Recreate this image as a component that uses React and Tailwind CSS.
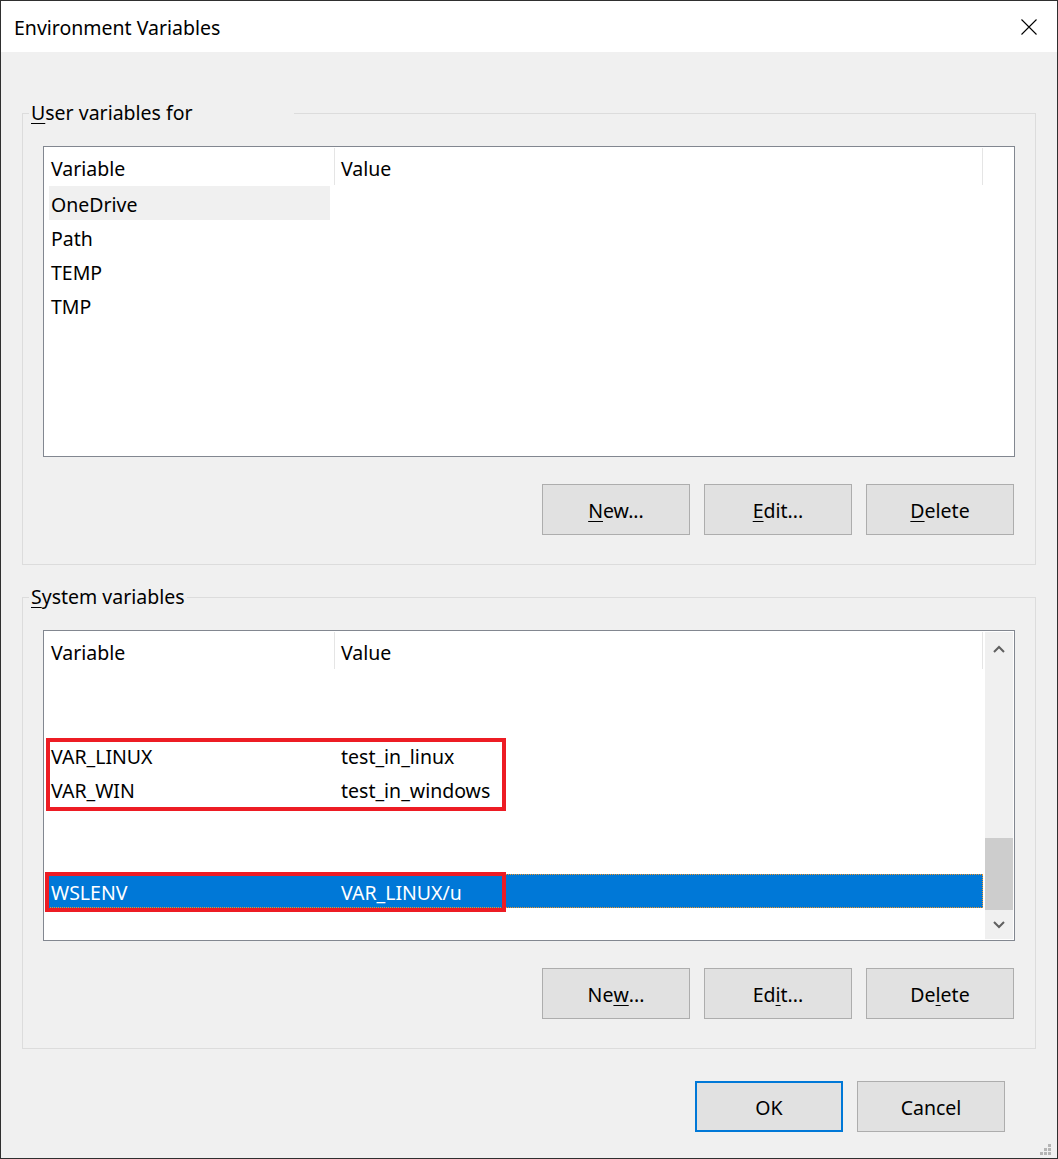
import React from 'react';

const Mn = ({ children }) => (
    <span className="underline decoration-1 underline-offset-[3px]">{children}</span>
);

const Btn = ({ children, primary }) => (
    <button
        className={
            primary
                ? 'w-[148px] h-[51px] pt-[2px] bg-[#e1e1e1] border-2 border-[#0078d7] flex items-center justify-center'
                : 'w-[148px] h-[51px] pt-[2px] bg-[#e1e1e1] border border-[#adadad] flex items-center justify-center'
        }
    >
        {children}
    </button>
);

const Header = () => (
    <div className="flex h-[39px] shrink-0 items-center">
        <div className="w-[290px] pl-[7px] pt-[5px]">Variable</div>
        <div className="w-px h-[37px] bg-[#e5e5e5]"></div>
        <div className="w-[647px] pl-[6px] pt-[5px]">Value</div>
        <div className="w-px h-[37px] bg-[#e5e5e5]"></div>
    </div>
);

const Row = ({ name = '', value = '' }) => (
    <div className="flex h-[34px] shrink-0 items-center pt-[3px]">
        <div className="w-[291px] pl-[7px]">{name}</div>
        <div className="pl-[6px]">{value}</div>
    </div>
);

const HoverRow = ({ name }) => (
    <div className="flex h-[34px] shrink-0">
        <div className="w-[291px] pl-[5px]">
            <div className="h-full w-[281px] bg-[#f0f0f0] pl-[2px] pt-[3px] flex items-center">{name}</div>
        </div>
    </div>
);

const SelectedRow = ({ name, value }) => (
    <div className="flex h-[34px] shrink-0 items-center pt-[3px] ml-[1px] w-[938px] bg-[#0078d7] text-white border border-dotted border-[#f0962a]">
        <div className="w-[289px] pl-[5px]">{name}</div>
        <div className="pl-[6px]">{value}</div>
    </div>
);

const ScrollBar = () => (
    <div className="w-[28px] my-[1px] mr-[1px] bg-[#f0f0f0] flex flex-col shrink-0">
        <div className="h-[34px] flex items-center justify-center">
            <svg width="12" height="8" viewBox="0 0 12 8">
                <path d="M1 7 L6 2 L11 7" fill="none" stroke="#606060" strokeWidth="2" />
            </svg>
        </div>
        <div className="flex-1 flex flex-col justify-end">
            <div className="h-[72px] bg-[#cdcdcd]"></div>
        </div>
        <div className="h-[29px] flex items-center justify-center">
            <svg width="12" height="8" viewBox="0 0 12 8">
                <path d="M1 1 L6 6 L11 1" fill="none" stroke="#606060" strokeWidth="2" />
            </svg>
        </div>
    </div>
);

const Group = ({ legend, legendClass, children }) => (
    <fieldset className="border border-[#dcdcdc] m-0 p-0 min-w-0">
        <legend className={legendClass}>{legend}</legend>
        <div className="px-[20px] pb-[29px]">{children}</div>
    </fieldset>
);

const ButtonRow = ({ sys }) => (
    <div className="flex justify-end gap-[14px] mt-[27px] mr-[1px]">
        {sys ? (
            <>
                <Btn>Ne<Mn>w</Mn>...</Btn>
                <Btn>Ed<Mn>i</Mn>t...</Btn>
                <Btn>De<Mn>l</Mn>ete</Btn>
            </>
        ) : (
            <>
                <Btn><Mn>N</Mn>ew...</Btn>
                <Btn><Mn>E</Mn>dit...</Btn>
                <Btn><Mn>D</Mn>elete</Btn>
            </>
        )}
    </div>
);

export default function App() {
    return (
        <div className="w-[1058px] h-[1159px] border border-[#2f2f2f] bg-[#f0f0f0] flex flex-col text-[19.5px] text-black font-['Segoe_UI','Noto_Sans',sans-serif] overflow-hidden">
            <div className="h-[51px] shrink-0 bg-white flex items-center justify-between pl-[13px] pr-[20px]">
                <span className="pt-[2px]">Environment Variables</span>
                <svg width="16" height="16" viewBox="0 0 16 16">
                    <path d="M0.5 0.5 L15.5 15.5 M15.5 0.5 L0.5 15.5" stroke="#000" strokeWidth="1.1" />
                </svg>
            </div>

            <div className="flex-1 flex flex-col px-[21px]">
                <div className="mt-[47px]">
                    <Group
                        legend={<><Mn>U</Mn>ser variables for</>}
                        legendClass="ml-[6px] px-[2px] w-[265px] leading-[28px]"
                    >
                        <div className="mt-[19px] h-[311px] border border-[#828790] bg-white flex flex-col">
                            <Header />
                            <HoverRow name="OneDrive" />
                            <Row name="Path" />
                            <Row name="TEMP" />
                            <Row name="TMP" />
                        </div>
                        <ButtonRow />
                    </Group>
                </div>

                <div className="mt-[18px]">
                    <Group
                        legend={<><Mn>S</Mn>ystem variables</>}
                        legendClass="ml-[6px] px-[2px] leading-[28px]"
                    >
                        <div className="relative mt-[19px] h-[311px] border border-[#828790] bg-white flex">
                            <div className="flex-1 flex flex-col overflow-hidden">
                                <Header />
                                <Row />
                                <Row />
                                <Row name="VAR_LINUX" value="test_in_linux" />
                                <Row name="VAR_WIN" value="test_in_windows" />
                                <Row />
                                <Row />
                                <SelectedRow name="WSLENV" value="VAR_LINUX/u" />
                                <Row />
                            </div>
                            <ScrollBar />
                            <div className="absolute left-[2px] top-[107px] w-[460px] h-[73px] border-4 border-[#ed1c24]"></div>
                            <div className="absolute left-[1px] top-[241px] w-[461px] h-[40px] border-4 border-[#ed1c24]"></div>
                        </div>
                        <ButtonRow sys />
                    </Group>
                </div>

                <div className="flex justify-end gap-[14px] mt-[32px] mr-[31px]">
                    <Btn primary>OK</Btn>
                    <Btn>Cancel</Btn>
                </div>

                <div className="flex-1 flex items-end justify-end -mr-[16px] pb-[2px]">
                    <svg width="12" height="12" viewBox="0 0 12 12">
                        <rect x="8" y="0" width="3" height="3" fill="#b5b5b5" />
                        <rect x="4" y="4" width="3" height="3" fill="#b5b5b5" />
                        <rect x="8" y="4" width="3" height="3" fill="#b5b5b5" />
                        <rect x="0" y="8" width="3" height="3" fill="#b5b5b5" />
                        <rect x="4" y="8" width="3" height="3" fill="#b5b5b5" />
                        <rect x="8" y="8" width="3" height="3" fill="#b5b5b5" />
                    </svg>
                </div>
            </div>
        </div>
    );
}
